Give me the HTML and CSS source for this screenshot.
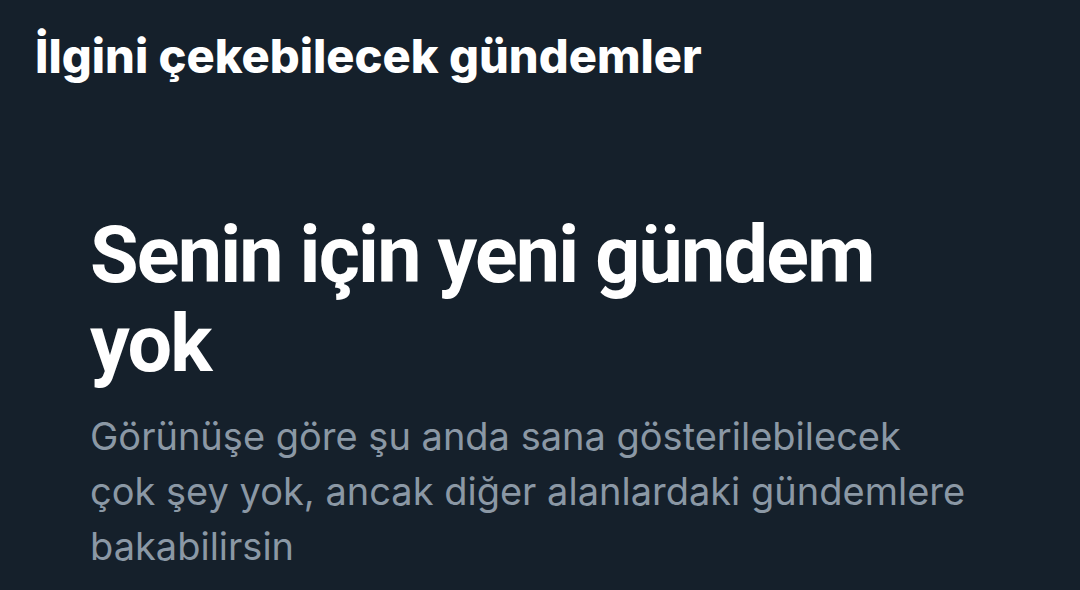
FILE: index.html
```html
<!DOCTYPE html>
<html lang="tr">
<head>
    <meta charset="UTF-8">
    <meta name="viewport" content="width=device-width, initial-scale=1.0">
    <title>Gündemler</title>
    <link rel="stylesheet" href="styles.css">
</head>
<body>
    <div class="sayfa">
        <h2 class="baslik">İlgini çekebilecek gündemler</h2>

        <div class="bos">
            <h1 class="bos-baslik">Senin için yeni gündem yok</h1>
            <p class="bos-metin">Görünüşe göre şu anda sana gösterilebilecek çok şey yok, ancak diğer alanlardaki gündemlere bakabilirsin</p>
        </div>
    </div>
</body>
</html>
```

FILE: styles.css
```css
*{
    box-sizing: border-box;
    margin: 0;
    padding: 0;
}
body{
    background-color: #15202b;
    font-family: Inter, "Liberation Sans", Arial, sans-serif;
    color: #ffffff;
}
.sayfa{
    height: 100vh;
    width: 100vw;
    overflow: hidden;
}
.baslik{
    font-size: 47px;
    font-weight: 800;
    line-height: 56px;
    padding: 28px 0 0 35px;
}
.bos{
    padding: 127px 0 0 90px;
    width: 970px;
}
.bos-baslik{
    font-family: Roboto, Inter, sans-serif;
    font-size: 79px;
    font-weight: 700;
    line-height: 89px;
    letter-spacing: -1.8px;
    margin-bottom: 20px;
}
.bos-metin{
    font-size: 38px;
    line-height: 55px;
    color: #8b98a5;
}
```
